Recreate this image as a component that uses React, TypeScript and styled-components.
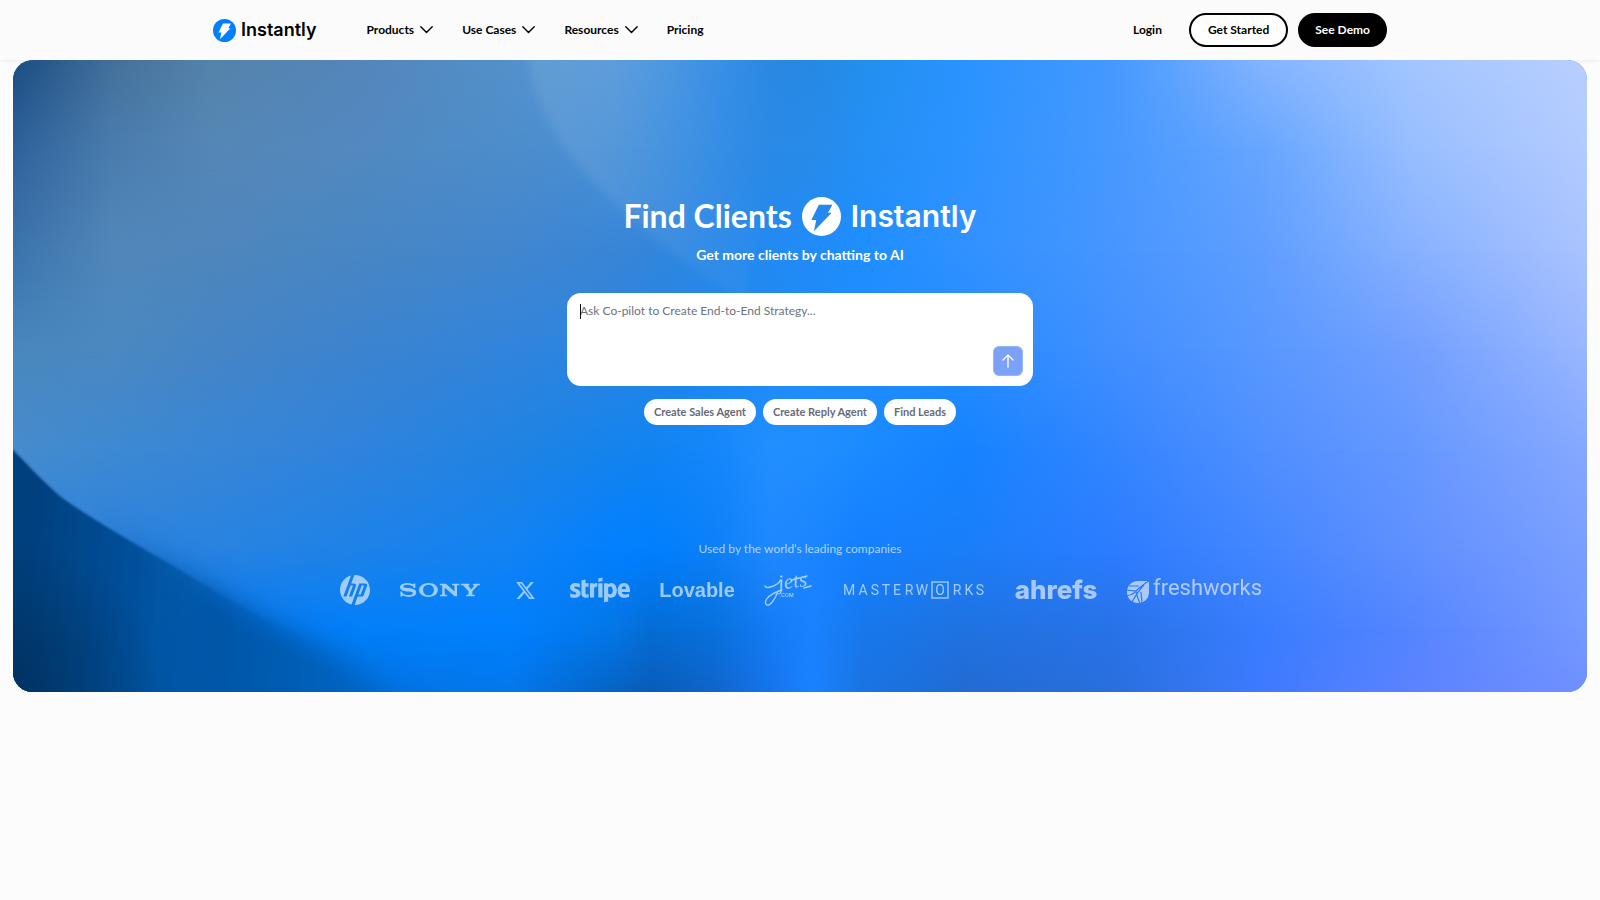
import React from "react";
import styled, { createGlobalStyle } from "styled-components";
import { FaStripe, FaXTwitter } from "react-icons/fa6";
import { SiHp, SiSony } from "react-icons/si";

const GlobalStyle = createGlobalStyle`
  *, *::before, *::after { box-sizing: border-box; }
  body {
    margin: 0;
    background: #fcfcfc;
    color: #000;
    font-family: Lato, "Open Sans", sans-serif;
    font-size: 12px;
    line-height: 16px;
  }
  button, textarea { font: inherit; }
  a { color: inherit; text-decoration: none; }
`;

const Header = styled.header`
  position: relative;
  background: #fbfbfb;
  box-shadow: 0 1px 4px rgba(0, 0, 0, 0.08);
`;

const HeaderInner = styled.div`
  display: flex;
  align-items: center;
  max-width: 1174px;
  height: 60px;
  margin: 0 auto;
`;

const Brand = styled.a`
  display: flex;
  align-items: center;
  gap: 5px;
  font-family: Inter, sans-serif;
  font-size: 18px;
  font-weight: 600;
  line-height: 24px;
`;

const Nav = styled.nav`
  display: flex;
  flex: 1;
  gap: 29px;
  margin-left: 50px;
`;

const NavButton = styled.button`
  display: flex;
  align-items: center;
  gap: 6px;
  padding: 0;
  border: 0;
  background: none;
  color: #000;
  font-weight: 700;
`;

const NavLink = styled.a`
  font-weight: 700;
`;

const Actions = styled.div`
  display: flex;
  align-items: center;
  gap: 10px;
`;

const LoginLink = styled(NavLink)`
  margin-right: 17px;
`;

const PillButton = styled.button<{ $solid?: boolean }>`
  height: 34px;
  padding: 0 ${(p) => (p.$solid ? 15 : 17)}px;
  border: 2px solid #000;
  border-radius: 17px;
  background: ${(p) => (p.$solid ? "#000" : "#fff")};
  color: ${(p) => (p.$solid ? "#fff" : "#000")};
  font-weight: 700;
`;

const Hero = styled.section`
  position: relative;
  display: flex;
  flex-direction: column;
  align-items: center;
  margin: 0 13px;
  padding: 136px 16px 85px;
  border-radius: 20px;
  overflow: hidden;
  background: #1c80f0;
  isolation: isolate;
`;

const Backdrop = styled.svg`
  position: absolute;
  inset: 0;
  z-index: -1;
  width: 100%;
  height: 100%;
`;

const Title = styled.h1`
  display: flex;
  align-items: center;
  gap: 10px;
  margin: 0;
  color: #fff;
  font-size: 32px;
  font-weight: 700;
  line-height: 40px;
`;

const TitleBrand = styled.span`
  font-family: Inter, sans-serif;
  font-size: 30px;
  font-weight: 600;
`;

const Subtitle = styled.p`
  margin: 9px 0 0;
  color: #fff;
  font-size: 14px;
  font-weight: 700;
  line-height: 20px;
`;

const Prompt = styled.form`
  position: relative;
  display: flex;
  width: 100%;
  max-width: 466px;
  height: 93px;
  margin-top: 28px;
  padding: 10px;
  border-radius: 14px;
  background: #fff;

  &::before {
    content: "";
    position: absolute;
    top: 11px;
    left: 13px;
    width: 1px;
    height: 15px;
    background: #111;
  }
`;

const PromptInput = styled.textarea`
  flex: 1;
  padding: 0 3px;
  border: 0;
  outline: 0;
  resize: none;
  background: none;
  font-size: 12px;
  line-height: 16px;

  &::placeholder { color: #6b7280; }
`;

const SendButton = styled.button`
  display: grid;
  place-items: center;
  align-self: flex-end;
  width: 30px;
  height: 30px;
  padding: 0;
  border: 1px solid #96b6fa;
  border-radius: 6px;
  background: #7ba2f8;
`;

const Chips = styled.div`
  display: flex;
  gap: 7px;
  margin-top: 13px;
`;

const Chip = styled.button`
  height: 26px;
  padding: 0 10px;
  border: 0;
  border-radius: 13px;
  background: #fff;
  color: #656b78;
  font-size: 11px;
  font-weight: 700;
`;

const Caption = styled.p`
  margin: 116px 0 0;
  color: rgba(255, 255, 255, 0.65);
  font-size: 12px;
  line-height: 16px;
`;

const Logos = styled.ul`
  display: flex;
  flex-wrap: wrap;
  align-items: center;
  justify-content: center;
  gap: 0 30px;
  margin: 16px 0 0;
  padding: 0;
  list-style: none;
  color: #fff;
  opacity: 0.6;
`;

const Logo = styled.li<{ $width: number }>`
  display: flex;
  align-items: center;
  justify-content: center;
  width: ${(p) => p.$width}px;
  height: 34px;

  svg { flex: none; overflow: visible; }
`;

const Sony = styled(SiSony)`
  width: 80px;
  height: 80px;
`;

const Stripe = styled(FaStripe)`
  width: 60px;
  height: 60px;
`;

/* Colour mesh of the hero: every row is a horizontal gradient that fades into the next one. */
const meshX = [0, 100, 200, 350, 500, 600, 640, 700, 760, 800, 850, 950, 1100, 1250, 1400, 1574];
const mesh: { y: number; colors: string[] }[] = [
  { y: 0, colors: ["#1a4d82", "#44709b", "#5583ac", "#5486bb", "#5391cc", "#5699da", "#4d97e0", "#3c91e6", "#2a88e2", "#2689e4", "#238fee", "#2a93ff", "#4599ff", "#84b4ff", "#a3c6ff", "#b9cfff"] },
  { y: 90, colors: ["#2f629b", "#4a7dae", "#5587b6", "#5289c0", "#4c8dcb", "#4890d7", "#418fdd", "#358de4", "#2a8ae6", "#278bea", "#258ff4", "#2c93ff", "#4798ff", "#66a6ff", "#98beff", "#b3cbff"] },
  { y: 190, colors: ["#3b73ac", "#5187b9", "#4f86bc", "#4886c4", "#4286cf", "#3985d6", "#3386db", "#2987e6", "#238af1", "#218bf8", "#1f8eff", "#3091ff", "#4796ff", "#5f9eff", "#87b1ff", "#aac3ff"] },
  { y: 290, colors: ["#4a87be", "#4b88c1", "#4585c6", "#3c83cf", "#3184dc", "#2985e2", "#2585e6", "#2187ee", "#1f8af5", "#1e8bfa", "#1e8dff", "#258cff", "#418fff", "#5898ff", "#729fff", "#99b7ff"] },
  { y: 390, colors: ["#468ccd", "#3d89d2", "#3886d7", "#2f83dd", "#2083e3", "#1583ed", "#1184f2", "#1487fb", "#228fff", "#208eff", "#1b8bff", "#1583ff", "#3385ff", "#508fff", "#6598ff", "#86a8ff"] },
  { y: 490, colors: ["#2f83dc", "#2c83de", "#2883e0", "#1d82e9", "#1282f4", "#0280ff", "#007fff", "#0c80f7", "#1f88ff", "#1b85ff", "#147fff", "#1a7ef8", "#2c7cff", "#4386ff", "#6090ff", "#7a9fff"] },
  { y: 570, colors: ["#0a70dc", "#0a76e6", "#0a7af0", "#027ff9", "#0080ff", "#0476e6", "#046cd4", "#0870dc", "#157cf6", "#1a82ff", "#1778ec", "#2072e0", "#2872e8", "#387dff", "#5585ff", "#7599ff"] },
  { y: 632, colors: ["#0060c0", "#0065c8", "#0068d0", "#0074e4", "#0377ea", "#0563c4", "#0a5cb8", "#1064ca", "#1675ec", "#1a82ff", "#1a74e2", "#216bd3", "#2a6fdc", "#3f7aff", "#5c82ff", "#7090ff"] },
];

const darkShape = "M-60 350 L0 390 C20 410 34 426 52 440 C84 462 116 480 150 500 C184 520 222 544 258 562 C300 584 370 612 400 660 L400 720 L-60 720 Z";

function HeroBackdrop() {
  return (
    <Backdrop viewBox="0 0 1574 632" preserveAspectRatio="none" aria-hidden="true">
      <defs>
        {mesh.map((row, i) => (
          <React.Fragment key={row.y}>
            <linearGradient id={`row${i}`} gradientUnits="userSpaceOnUse" x1="0" x2="1574">
              {row.colors.map((c, j) => (
                <stop key={meshX[j]} offset={meshX[j] / 1574} stopColor={c} />
              ))}
            </linearGradient>
            {i > 0 && (
              <>
                <linearGradient id={`fade${i}`} gradientUnits="userSpaceOnUse" x1="0" x2="0" y1={mesh[i - 1].y} y2={row.y}>
                  <stop offset="0" stopColor="#fff" stopOpacity="0" />
                  <stop offset="1" stopColor="#fff" />
                </linearGradient>
                <mask id={`mask${i}`} maskUnits="userSpaceOnUse" x="0" y="0" width="1574" height="632">
                  <rect width="1574" height="632" fill={`url(#fade${i})`} />
                </mask>
              </>
            )}
          </React.Fragment>
        ))}
        <linearGradient id="fold" gradientUnits="userSpaceOnUse" x1="530" y1="100" x2="700" y2="20">
          <stop offset="0" stopColor="#fff" stopOpacity="0.09" />
          <stop offset="0.25" stopColor="#fff" stopOpacity="0.08" />
          <stop offset="1" stopColor="#fff" stopOpacity="0" />
        </linearGradient>
        <linearGradient id="deep" gradientUnits="userSpaceOnUse" x1="0" y1="560" x2="380" y2="600">
          <stop offset="0" stopColor="#003f7c" />
          <stop offset="0.3" stopColor="#00509b" />
          <stop offset="0.7" stopColor="#005bb0" />
          <stop offset="1" stopColor="#0068cc" />
        </linearGradient>
        <radialGradient id="corner" gradientUnits="userSpaceOnUse" cx="0" cy="632" r="150">
          <stop offset="0" stopColor="#002c55" stopOpacity="0.7" />
          <stop offset="1" stopColor="#002c55" stopOpacity="0" />
        </radialGradient>
        <linearGradient id="nearFade" gradientUnits="userSpaceOnUse" x1="120" x2="290">
          <stop offset="0" stopColor="#fff" />
          <stop offset="1" stopColor="#fff" stopOpacity="0" />
        </linearGradient>
        <linearGradient id="farFade" gradientUnits="userSpaceOnUse" x1="80" x2="200">
          <stop offset="0" stopColor="#fff" stopOpacity="0" />
          <stop offset="1" stopColor="#fff" />
        </linearGradient>
        <mask id="near" maskUnits="userSpaceOnUse" x="0" y="0" width="1574" height="632">
          <rect width="1574" height="632" fill="url(#nearFade)" />
        </mask>
        <mask id="far" maskUnits="userSpaceOnUse" x="0" y="0" width="1574" height="632">
          <rect width="1574" height="632" fill="url(#farFade)" />
        </mask>
        <filter id="crisp" x="-20%" y="-20%" width="140%" height="140%"><feGaussianBlur stdDeviation="1" /></filter>
        <filter id="hazy" x="-20%" y="-20%" width="140%" height="140%"><feGaussianBlur stdDeviation="4" /></filter>
        <filter id="soft" x="-20%" y="-20%" width="140%" height="140%"><feGaussianBlur stdDeviation="14" /></filter>
      </defs>
      {mesh.map((row, i) => (
        <rect key={row.y} width="1574" height="632" fill={`url(#row${i})`} mask={i ? `url(#mask${i})` : undefined} />
      ))}
      <path d="M512 -30 C516 10 520 30 530 50 C545 84 568 112 599 140 C625 166 665 200 730 240 L790 -30 Z" fill="url(#fold)" filter="url(#hazy)" />
      <g mask="url(#far)"><path d={darkShape} fill="url(#deep)" filter="url(#soft)" /></g>
      <g mask="url(#near)"><path d={darkShape} fill="url(#deep)" filter="url(#crisp)" /></g>
      <rect y="470" width="160" height="162" fill="url(#corner)" />
    </Backdrop>
  );
}

function BoltMark({ size, disc, bolt }: { size: number; disc: string; bolt: string }) {
  return (
    <svg width={size} height={size} viewBox="0 0 40 40" aria-hidden="true">
      <circle cx="20" cy="20" r="20" fill={disc} />
      <path d="M17.3 8H31.2L26.6 16.2H30.4L12.2 35.2L14.6 23.6H9.6Z" fill={bolt} />
    </svg>
  );
}

function Chevron() {
  return (
    <svg width="13" height="8" viewBox="0 0 13 8" fill="none" stroke="#000" strokeWidth="1.4" aria-hidden="true">
      <path d="M.8 .8L6.5 6.6L12.2 .8" strokeLinecap="round" strokeLinejoin="round" />
    </svg>
  );
}

function JetsLogo() {
  return (
    <svg width="49" height="34" viewBox="0 0 49 34" fill="#fff" role="img" aria-label="jets.com">
      <text x="15" y="17" fontFamily="Liberation Serif, serif" fontStyle="italic" fontSize="21" transform="rotate(-8 14 17)">jets</text>
      <path d="M1 13C2 16 12 14 17 7M14 18C11 27 6 33 3 32C-1 30 2 22 18 17M28 7L43 3M40 15L47 13" fill="none" stroke="#fff" strokeWidth="1.4" strokeLinecap="round" />
      <text x="16" y="24" fontFamily="Inter, sans-serif" fontSize="5" fontWeight="600">.COM</text>
    </svg>
  );
}

function MasterworksLogo() {
  return (
    <svg width="142" height="20" viewBox="0 0 142 20" fill="#fff" role="img" aria-label="Masterworks">
      <g fontFamily="Roboto, sans-serif" fontSize="14" fontWeight="400" textAnchor="middle">
        {["M", "A", "S", "T", "E", "R", "W"].map((c, i) => (
          <text key={c} x={[6, 20, 32, 43, 54, 66, 79][i]} y="15">{c}</text>
        ))}
        <text x="97" y="15">O</text>
        {["R", "K", "S"].map((c, i) => (
          <text key={c} x={[114, 126, 137][i]} y="15">{c}</text>
        ))}
      </g>
      <rect x="89" y="2" width="16" height="16" fill="none" stroke="#fff" strokeWidth="1.4" />
    </svg>
  );
}

function FreshworksLogo() {
  return (
    <svg width="133" height="34" viewBox="0 0 133 34" fill="#fff" role="img" aria-label="freshworks">
      <defs>
        <mask id="veins">
          <rect width="24" height="34" fill="#fff" />
          <path d="M-1 17L9 18C13 14 17 11 23 7M9 18C7 21 4 22 -1 23M9 18C9 23 12 26 13 31M2 13L12 13M17 12C13 16 10 20 5 29M14 19L15 30" fill="none" stroke="#000" strokeWidth="1.2" />
        </mask>
      </defs>
      <path mask="url(#veins)" d="M22 8V19C22 26 17 30 11 30C5 30 0 26 0 19C0 12 5 8 11 8Z" />
      <text x="26" y="22" fontFamily="Roboto, sans-serif" fontSize="22" fontWeight="400">freshworks</text>
    </svg>
  );
}

const Wordmark = styled.span<{ $font: string; $size: number; $weight: number }>`
  font-family: ${(p) => p.$font}, sans-serif;
  font-size: ${(p) => p.$size}px;
  font-weight: ${(p) => p.$weight};
  line-height: 24px;
`;

export default function App() {
  return (
    <>
      <GlobalStyle />
      <Header>
        <HeaderInner>
          <Brand href="#">
            <BoltMark size={23} disc="#0080ff" bolt="#fff" />
            Instantly
          </Brand>
          <Nav aria-label="Main">
            {["Products", "Use Cases", "Resources"].map((label) => (
              <NavButton key={label} type="button">
                {label}
                <Chevron />
              </NavButton>
            ))}
            <NavLink href="#pricing">Pricing</NavLink>
          </Nav>
          <Actions>
            <LoginLink href="#login">Login</LoginLink>
            <PillButton type="button">Get Started</PillButton>
            <PillButton type="button" $solid>See Demo</PillButton>
          </Actions>
        </HeaderInner>
      </Header>
      <main>
        <Hero>
          <HeroBackdrop />
          <Title>
            Find Clients
            <BoltMark size={39} disc="#fff" bolt="#2389f0" />
            <TitleBrand>Instantly</TitleBrand>
          </Title>
          <Subtitle>Get more clients by chatting to AI</Subtitle>
          <Prompt onSubmit={(e) => e.preventDefault()}>
            <PromptInput aria-label="Ask Co-pilot" placeholder="Ask Co-pilot to Create End-to-End Strategy..." />
            <SendButton type="submit" aria-label="Send">
              <svg width="12" height="14" viewBox="0 0 12 14" fill="none" stroke="#fff" strokeWidth="1.4" strokeLinecap="round" strokeLinejoin="round">
                <path d="M6 13V1M1 6L6 1L11 6" />
              </svg>
            </SendButton>
          </Prompt>
          <Chips>
            {["Create Sales Agent", "Create Reply Agent", "Find Leads"].map((label) => (
              <Chip key={label} type="button">{label}</Chip>
            ))}
          </Chips>
          <Caption>Used by the world’s leading companies</Caption>
          <Logos>
            <Logo $width={30}><SiHp size={30} title="HP" /></Logo>
            <Logo $width={80}><Sony title="Sony" /></Logo>
            <Logo $width={30}><FaXTwitter size={21} title="X" /></Logo>
            <Logo $width={60}><Stripe title="Stripe" /></Logo>
            <Logo $width={74}><Wordmark $font="Liberation Sans" $size={20} $weight={700}>Lovable</Wordmark></Logo>
            <Logo $width={49}><JetsLogo /></Logo>
            <Logo $width={142}><MasterworksLogo /></Logo>
            <Logo $width={82}><Wordmark $font="Inter" $size={26} $weight={800}>ahrefs</Wordmark></Logo>
            <Logo $width={133}><FreshworksLogo /></Logo>
          </Logos>
        </Hero>
      </main>
    </>
  );
}
